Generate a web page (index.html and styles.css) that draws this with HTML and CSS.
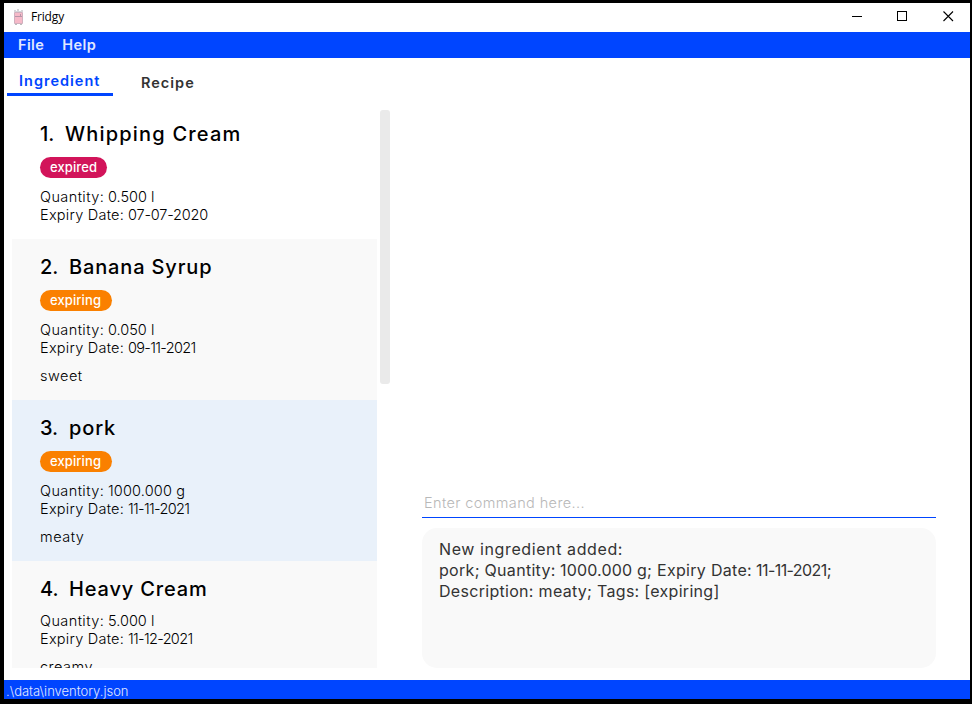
FILE: index.html
```html
<!DOCTYPE html>
<html lang="en">
<head>
<meta charset="utf-8">
<title>Fridgy</title>
<link rel="stylesheet" href="styles.css">
</head>
<body>
<div class="window">
  <header class="titlebar">
    <svg class="app-icon" width="12" height="16" viewBox="0 0 12 16">
      <path d="M1 1h2v1h1V0h2v2h2V1h2v2H1z" fill="#d5d5d9"/>
      <path d="M1.500 3.500h8v11h-8z" fill="#f6b9c8" stroke="#d0b0be"/>
      <path d="M2 7.500h7M7.500 5v2" stroke="#b795a8" fill="none"/>
      <path d="M2 15.500h2M7 15.500h2" stroke="#bbb"/>
    </svg>
    <span class="app-name">Fridgy</span>
    <svg class="controls" width="103" height="11" viewBox="0 0 103 11" fill="none" stroke="#000" shape-rendering="crispEdges">
      <path d="M0 5.500h10"/>
      <path d="M45.500.5h9v9h-9z"/>
      <path d="M91.500.5l9.500 9.500M101 .5l-9.500 9.500" shape-rendering="auto" stroke-width="1.100"/>
    </svg>
  </header>
  <nav class="menubar"><span>File</span><span>Help</span></nav>
  <div class="tabs"><span class="tab tab-active">Ingredient</span><span class="tab">Recipe</span></div>
  <main class="content">
    <section class="list">
      <article class="cell">
        <h2 class="name name-wide"><span class="num num-narrow">1.</span><span>Whipping Cream</span></h2>
        <span class="tag tag-expired">expired</span>
        <p class="line"><span class="label-qty">Quantity:</span><span>0.500 l</span></p>
        <p class="line"><span class="label-date">Expiry Date:</span><span class="date-loose">07-07-2020</span></p>
      </article>
      <article class="cell odd">
        <h2 class="name"><span class="num">2.</span><span>Banana Syrup</span></h2>
        <span class="tag">expiring</span>
        <p class="line"><span class="label-qty">Quantity:</span><span>0.050 l</span></p>
        <p class="line"><span class="label-date">Expiry Date:</span><span class="date">09-11-2021</span></p>
        <p class="desc">sweet</p>
      </article>
      <article class="cell selected">
        <h2 class="name"><span class="num">3.</span><span>pork</span></h2>
        <span class="tag">expiring</span>
        <p class="line"><span class="label-qty">Quantity:</span><span class="qty-wide">1000.000 g</span></p>
        <p class="line"><span class="label-date">Expiry Date:</span><span class="date">11-11-2021</span></p>
        <p class="desc">meaty</p>
      </article>
      <article class="cell odd">
        <h2 class="name"><span class="num">4.</span><span>Heavy Cream</span></h2>
        <p class="line"><span class="label-qty">Quantity:</span><span>5.000 l</span></p>
        <p class="line"><span class="label-date">Expiry Date:</span><span class="date">11-12-2021</span></p>
        <p class="desc">creamy</p>
      </article>
    </section>
    <div class="scroll"><div class="thumb"></div></div>
    <section class="side">
      <div class="command">Enter command here...</div>
      <div class="result">
        <p class="result-head">New ingredient added:</p>
        <p><span class="result-name">pork; Quantity:</span><span class="result-qty">1000.000 g;</span><span class="result-label">Expiry Date:</span><span class="result-date">11-11-2021;</span></p>
        <p class="result-desc">Description: meaty; Tags: [expiring]</p>
      </div>
    </section>
  </main>
  <footer class="status">.\data\inventory.json</footer>
</div>
</body>
</html>
```
FILE: styles.css
```css
* { box-sizing: border-box; }
body { margin: 0; background: #000; font-family: Inter, sans-serif; color: #000; }
h2, p { margin: 0; }
.window { width: 966px; height: 696px; margin: 3px 0 0 4px; background: #fff; display: flex; flex-direction: column; }
.titlebar { height: 29px; display: flex; align-items: center; padding: 0 15px 2px 9px; }
.app-name { font: 12px "Open Sans", sans-serif; letter-spacing: -0.17px; margin-left: 6px; }
.controls { margin-left: auto; }
.menubar { height: 26px; background: #0045ff; color: #e0e8ff; font-size: 14.5px; font-weight: 600; line-height: 26px; letter-spacing: 0.4px; display: flex; padding-left: 14px; gap: 18px; }
.tabs { height: 45px; display: flex; padding-left: 3px; font-size: 14.5px; font-weight: 600; letter-spacing: 1px; color: #333; }
.tab { padding-left: 28px; line-height: 50px; }
.tab-active { width: 106px; height: 38px; padding-left: 12px; line-height: 46px; color: #0045ff; border-bottom: 3px solid #0045ff; }
.content { height: 577px; display: flex; padding: 3px 34px 12px 8px; }
.list { width: 365px; height: 562px; overflow: hidden; }
.cell { height: 161px; padding: 15px 28px 0; }
.cell:first-child { height: 133px; }
.odd { background: #f9f9f9; }
.selected { background: #e9f1fa; }
.name { height: 26px; margin-bottom: 10px; font-size: 20px; line-height: 26px; font-weight: 500; letter-spacing: 0.85px; display: flex; }
.name-wide { letter-spacing: 1.2px; }
.num { width: 29px; letter-spacing: 0; }
.num-narrow { width: 25px; }
.tag { display: flex; width: 72px; height: 21px; margin-bottom: 10px; padding-left: 10px; border-radius: 11px; background: #fa8000; color: #fff; font-size: 13px; font-weight: 500; line-height: 21px; letter-spacing: 0.1px; }
.tag-expired { width: 67px; background: #d2145a; }
.line, .desc { font-size: 14.5px; font-weight: 300; line-height: 18px; height: 18px; display: flex; }
.label-qty { width: 68px; letter-spacing: 0.4px; }
.label-date { width: 88px; letter-spacing: 0.25px; }
.qty-wide { letter-spacing: 0.15px; }
.date { letter-spacing: -0.67px; }
.date-loose { letter-spacing: -0.19px; }
.desc { margin-top: 10px; letter-spacing: 0.5px; }
.scroll { width: 10px; margin: 4px 0 0 3px; }
.thumb { height: 274px; border-radius: 3px; background: #eaeaea; }
.side { flex: 1; margin-left: 32px; display: flex; flex-direction: column; justify-content: flex-end; }
.command { height: 30px; border-bottom: 1px solid #0045ff; padding-left: 2px; font-size: 14.5px; font-weight: 300; line-height: 30px; letter-spacing: 0.38px; color: #b8b8b8; }
.result { height: 140px; margin-top: 10px; border-radius: 15px; background: #f9f9f9; padding: 11px 17px; color: #333; font-size: 16px; line-height: 21px; }
.result p { display: flex; }
.result-head { letter-spacing: 0.6px; }
.result-name { width: 121px; letter-spacing: 0.3px; }
.result-qty { width: 97px; letter-spacing: 0.18px; }
.result-label { width: 99px; letter-spacing: 0.3px; }
.result-date { letter-spacing: -0.56px; }
.result-desc { letter-spacing: 0.3px; }
.status { height: 19px; background: #0045ff; color: #e0e8ff; font-size: 13px; font-weight: 300; line-height: 22px; padding-left: 2px; }
```
